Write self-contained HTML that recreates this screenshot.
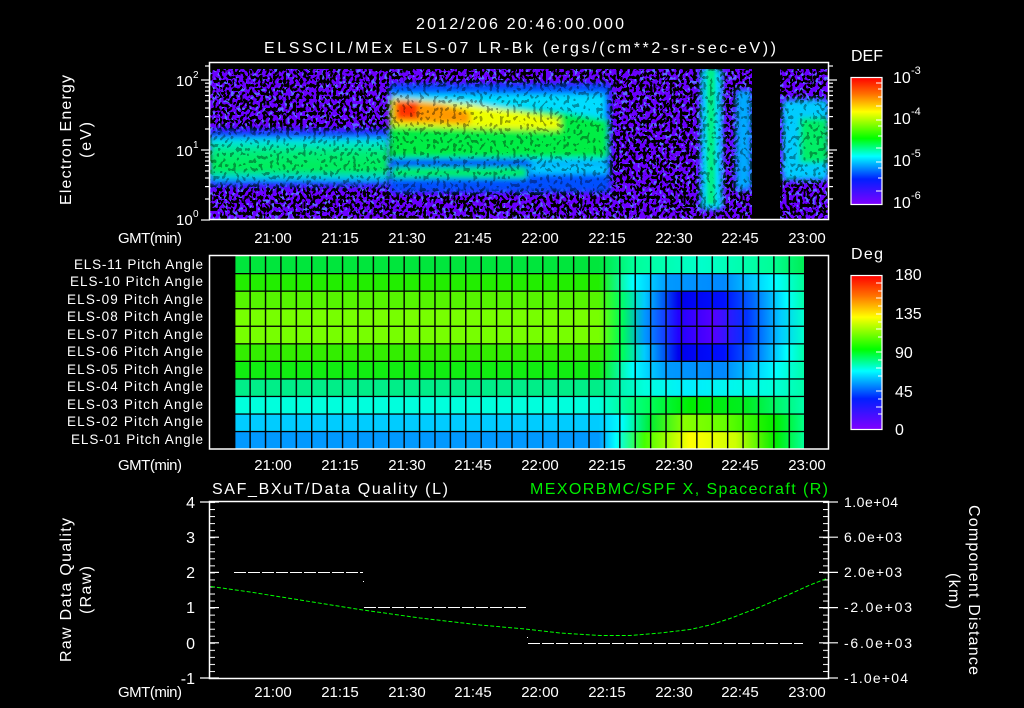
<!DOCTYPE html>
<html><head><meta charset="utf-8"><style>
html,body{margin:0;padding:0;background:#000;overflow:hidden}
svg{display:block}
text{font-family:"Liberation Sans",sans-serif;fill:#fff}
</style></head><body>
<svg width="1024" height="708" viewBox="0 0 1024 708" xmlns="http://www.w3.org/2000/svg">
<defs>
  <linearGradient id="cb" x1="0" y1="0" x2="0" y2="1">
    <stop offset="0" stop-color="#ff0000"/>
    <stop offset="0.13" stop-color="#ff7000"/>
    <stop offset="0.27" stop-color="#ffff00"/>
    <stop offset="0.48" stop-color="#00ff00"/>
    <stop offset="0.62" stop-color="#00ffff"/>
    <stop offset="0.8" stop-color="#0020ff"/>
    <stop offset="1" stop-color="#8000ff"/>
  </linearGradient>
  <filter id="blk" filterUnits="userSpaceOnUse" x="200" y="60" width="640" height="170">
    <feTurbulence type="fractalNoise" baseFrequency="0.3 0.25" numOctaves="1" seed="4"/>
    <feColorMatrix type="matrix" values="0 0 0 0 0  0 0 0 0 0  0 0 0 0 0  -4 0 0 0 2.15"/>
    <feComponentTransfer><feFuncA type="discrete" tableValues="0 1"/></feComponentTransfer>
  </filter>
  <filter id="blk2" filterUnits="userSpaceOnUse" x="200" y="60" width="640" height="170">
    <feTurbulence type="fractalNoise" baseFrequency="0.3 0.25" numOctaves="1" seed="9"/>
    <feColorMatrix type="matrix" values="0 0 0 0 0  0 0 0 0 0  0 0 0 0 0  -4 0 0 0 2.3"/>
    <feComponentTransfer><feFuncA type="discrete" tableValues="0 1"/></feComponentTransfer>
  </filter>
  <filter id="blu" filterUnits="userSpaceOnUse" x="200" y="60" width="640" height="170">
    <feTurbulence type="fractalNoise" baseFrequency="0.32 0.26" numOctaves="1" seed="17"/>
    <feColorMatrix type="matrix" values="0 0 0 0 0.1  0 0 0 0 0.15  0 0 0 0 1  -4 0 0 0 2.1"/>
    <feComponentTransfer><feFuncA type="discrete" tableValues="0 1"/></feComponentTransfer>
  </filter>
  <filter id="bl" filterUnits="userSpaceOnUse" x="190" y="50" width="660" height="190"><feGaussianBlur stdDeviation="3"/></filter>
  <filter id="bl2" filterUnits="userSpaceOnUse" x="190" y="50" width="660" height="190"><feGaussianBlur stdDeviation="1.5"/></filter>
  <clipPath id="spc"><rect x="210" y="69" width="618" height="150"/></clipPath>
  <pattern id="tminT" x="273" y="0" width="6.675" height="708" patternUnits="userSpaceOnUse"><rect x="0" y="0" width="1" height="4" fill="#fff"/></pattern>
  <pattern id="tmajT" x="273" y="0" width="66.75" height="708" patternUnits="userSpaceOnUse"><rect x="0" y="0" width="1.2" height="9" fill="#fff"/></pattern>
  <pattern id="vgrid" x="234" y="0" width="15.405" height="708" patternUnits="userSpaceOnUse"><rect x="0" y="0" width="1.4" height="708" fill="#000"/></pattern>
  <pattern id="yminB" x="0" y="502" width="1024" height="7.04" patternUnits="userSpaceOnUse"><rect x="0" y="0" width="1024" height="1" fill="#fff"/></pattern>
  <linearGradient id="r11" x1="0" x2="1"><stop offset="0.64" stop-color="#00e63c"/><stop offset="0.7" stop-color="#00ff99"/><stop offset="0.82" stop-color="#00ffcc"/><stop offset="0.94" stop-color="#00ff99"/><stop offset="1" stop-color="#00ee55"/></linearGradient>
  <linearGradient id="r10" x1="0" x2="1"><stop offset="0.64" stop-color="#22ee00"/><stop offset="0.7" stop-color="#00ffff"/><stop offset="0.76" stop-color="#0099ff"/><stop offset="0.86" stop-color="#0088ff"/><stop offset="0.95" stop-color="#00ffff"/><stop offset="1" stop-color="#00ff99"/></linearGradient>
  <linearGradient id="r09" x1="0" x2="1"><stop offset="0.64" stop-color="#55f500"/><stop offset="0.68" stop-color="#00ff66"/><stop offset="0.72" stop-color="#00ccff"/><stop offset="0.78" stop-color="#0000ee"/><stop offset="0.86" stop-color="#0010ff"/><stop offset="0.91" stop-color="#0066ff"/><stop offset="0.97" stop-color="#00ffff"/><stop offset="1" stop-color="#00ffaa"/></linearGradient>
  <linearGradient id="r08" x1="0" x2="1"><stop offset="0.64" stop-color="#77ff00"/><stop offset="0.68" stop-color="#00ff55"/><stop offset="0.72" stop-color="#0099ff"/><stop offset="0.78" stop-color="#2200ff"/><stop offset="0.84" stop-color="#5500ff"/><stop offset="0.9" stop-color="#0033ff"/><stop offset="0.96" stop-color="#00ccff"/><stop offset="1" stop-color="#00ffcc"/></linearGradient>
  <linearGradient id="r06" x1="0" x2="1"><stop offset="0.64" stop-color="#33ee00"/><stop offset="0.68" stop-color="#00ff55"/><stop offset="0.72" stop-color="#00ccff"/><stop offset="0.78" stop-color="#0000ee"/><stop offset="0.86" stop-color="#0010ff"/><stop offset="0.91" stop-color="#0066ff"/><stop offset="0.97" stop-color="#00ffff"/><stop offset="1" stop-color="#00ffaa"/></linearGradient>
  <linearGradient id="r05" x1="0" x2="1"><stop offset="0.64" stop-color="#11ee11"/><stop offset="0.7" stop-color="#00ffff"/><stop offset="0.76" stop-color="#0099ff"/><stop offset="0.86" stop-color="#0088ff"/><stop offset="0.95" stop-color="#00ffff"/><stop offset="1" stop-color="#00ffaa"/></linearGradient>
  <linearGradient id="r04" x1="0" x2="1"><stop offset="0.64" stop-color="#00ee88"/><stop offset="0.72" stop-color="#00ffdd"/><stop offset="0.8" stop-color="#00eeff"/><stop offset="0.94" stop-color="#00ffdd"/><stop offset="1" stop-color="#00ffaa"/></linearGradient>
  <linearGradient id="r03" x1="0" x2="1"><stop offset="0.64" stop-color="#00ffdd"/><stop offset="0.72" stop-color="#00ff66"/><stop offset="0.8" stop-color="#00ee00"/><stop offset="0.9" stop-color="#00ee22"/><stop offset="1" stop-color="#00ffaa"/></linearGradient>
  <linearGradient id="r02" x1="0" x2="1"><stop offset="0.64" stop-color="#00ccff"/><stop offset="0.68" stop-color="#00ffff"/><stop offset="0.73" stop-color="#00ee33"/><stop offset="0.79" stop-color="#88ff00"/><stop offset="0.86" stop-color="#66ff00"/><stop offset="0.95" stop-color="#00ee00"/><stop offset="1" stop-color="#00ff88"/></linearGradient>
  <linearGradient id="r01" x1="0" x2="1"><stop offset="0.64" stop-color="#0099ff"/><stop offset="0.67" stop-color="#00ffff"/><stop offset="0.72" stop-color="#44ff00"/><stop offset="0.8" stop-color="#ffff00"/><stop offset="0.88" stop-color="#ccff00"/><stop offset="0.95" stop-color="#00ee00"/><stop offset="1" stop-color="#00ff99"/></linearGradient>
  <linearGradient id="lband" x1="0" y1="0" x2="0" y2="1"><stop offset="0" stop-color="#00ddff"/><stop offset="0.35" stop-color="#00ee77"/><stop offset="0.75" stop-color="#00ee55"/><stop offset="1" stop-color="#00ccff"/></linearGradient>
</defs>

<text x="416" y="29" font-size="16" textLength="208">2012/206 20:46:00.000</text>
<text x="264" y="53" font-size="16" textLength="512">ELSSCIL/MEx ELS-07 LR-Bk  (ergs/(cm**2-sr-sec-eV))</text>

<!-- ===== TOP SPECTROGRAM ===== -->
<g clip-path="url(#spc)">
  <rect x="210" y="69" width="618" height="150" fill="#6a00ff"/>
  <rect x="210" y="69" width="618" height="150" filter="url(#blu)"/>
  <rect x="210" y="69" width="618" height="150" filter="url(#blk)"/>
  <rect x="608" y="69" width="220" height="150" filter="url(#blk2)"/>
  <g filter="url(#bl)">
    <rect x="210" y="130" width="178" height="56" fill="#1040ff"/>
    <rect x="210" y="138" width="178" height="42" fill="url(#lband)"/>
    <rect x="390" y="84" width="220" height="108" fill="#0050ff"/>
    <rect x="390" y="94" width="215" height="68" fill="#00ddff"/>
    <polygon points="390,100 560,112 608,120 608,158 390,158" fill="#00ee44"/>
    <polygon points="392,98 470,104 560,118 560,130 470,128 392,126" fill="#eeff00"/>
    <polygon points="394,100 440,104 470,112 470,124 394,122" fill="#ff9900"/>
    <rect x="396" y="101" width="22" height="18" fill="#ff3300"/>
    <rect x="390" y="159" width="140" height="6" fill="#0030ff"/>
    <rect x="392" y="167" width="135" height="11" fill="#00ee66"/>
    <rect x="530" y="164" width="78" height="10" fill="#00ccff"/>
    <rect x="701" y="69" width="21" height="140" fill="#00ddff"/>
    <rect x="736" y="90" width="15" height="100" fill="#00aaff"/>
    <rect x="783" y="100" width="45" height="80" fill="#00ccff"/>
    <rect x="800" y="118" width="28" height="45" fill="#00ee66"/>
  </g>
  <rect x="707" y="69" width="8" height="135" fill="#00ee88" filter="url(#bl2)"/>
  <rect x="752" y="69" width="28" height="150" fill="#000"/>
  <rect x="210" y="69" width="618" height="150" filter="url(#blk)" opacity="0.35"/>
</g>
<rect x="209.5" y="62.5" width="619" height="157" fill="none" stroke="#fff" stroke-width="1.5"/>
<rect x="210" y="63" width="618" height="4" fill="url(#tminT)"/>
<rect x="210" y="63" width="618" height="9" fill="url(#tmajT)"/>
<g transform="translate(0,282) scale(1,-1)"><rect x="210" y="63" width="618" height="4" fill="url(#tminT)"/><rect x="210" y="63" width="618" height="9" fill="url(#tmajT)"/></g>
<g stroke="#fff" stroke-width="1.2">
  <line x1="201" y1="80" x2="210" y2="80"/><line x1="201" y1="150" x2="210" y2="150"/><line x1="201" y1="220" x2="210" y2="220"/>
  <line x1="828" y1="80" x2="837" y2="80"/><line x1="828" y1="150" x2="837" y2="150"/>
  <g id="lm">
  <line x1="205" y1="199" x2="210" y2="199"/><line x1="205" y1="186.6" x2="210" y2="186.6"/><line x1="205" y1="178" x2="210" y2="178"/><line x1="205" y1="171" x2="210" y2="171"/><line x1="205" y1="165.5" x2="210" y2="165.5"/><line x1="205" y1="161" x2="210" y2="161"/><line x1="205" y1="157" x2="210" y2="157"/><line x1="205" y1="153.2" x2="210" y2="153.2"/>
  <line x1="205" y1="129" x2="210" y2="129"/><line x1="205" y1="116.6" x2="210" y2="116.6"/><line x1="205" y1="108" x2="210" y2="108"/><line x1="205" y1="101" x2="210" y2="101"/><line x1="205" y1="95.5" x2="210" y2="95.5"/><line x1="205" y1="91" x2="210" y2="91"/><line x1="205" y1="87" x2="210" y2="87"/><line x1="205" y1="83.2" x2="210" y2="83.2"/>
  <line x1="205" y1="66" x2="210" y2="66"/>
  </g>
  <use href="#lm" transform="translate(1038,0) scale(-1,1)"/>
</g>
<text x="176" y="86" font-size="15">10</text><text x="193" y="78" font-size="10">2</text>
<text x="176" y="156" font-size="15">10</text><text x="193" y="148" font-size="10">1</text>
<text x="176" y="225" font-size="15">10</text><text x="193" y="217" font-size="10">0</text>
<text transform="translate(71,140) rotate(-90)" font-size="16" text-anchor="middle" textLength="130">Electron Energy</text>
<text transform="translate(91,140) rotate(-90)" font-size="16" text-anchor="middle" textLength="36">(eV)</text>

<g font-size="15" text-anchor="middle">
  <text x="118" y="243" text-anchor="start" textLength="64">GMT(min)</text>
  <text x="273" y="243">21:00</text><text x="340" y="243">21:15</text><text x="407" y="243">21:30</text><text x="473" y="243">21:45</text><text x="540" y="243">22:00</text><text x="607" y="243">22:15</text><text x="674" y="243">22:30</text><text x="740" y="243">22:45</text><text x="807" y="243">23:00</text>
  <text x="118" y="470" text-anchor="start" textLength="64">GMT(min)</text>
  <text x="273" y="470">21:00</text><text x="340" y="470">21:15</text><text x="407" y="470">21:30</text><text x="473" y="470">21:45</text><text x="540" y="470">22:00</text><text x="607" y="470">22:15</text><text x="674" y="470">22:30</text><text x="740" y="470">22:45</text><text x="807" y="470">23:00</text>
  <text x="118" y="697" text-anchor="start" textLength="64">GMT(min)</text>
  <text x="273" y="697">21:00</text><text x="340" y="697">21:15</text><text x="407" y="697">21:30</text><text x="473" y="697">21:45</text><text x="540" y="697">22:00</text><text x="607" y="697">22:15</text><text x="674" y="697">22:30</text><text x="740" y="697">22:45</text><text x="807" y="697">23:00</text>
</g>

<text x="851" y="61" font-size="16" textLength="32">DEF</text>
<rect x="851" y="77.5" width="31" height="127" fill="url(#cb)" stroke="#fff" stroke-width="1.2"/>
<g stroke="#fff" stroke-width="1">
  <line x1="876" y1="83" x2="882" y2="83"/><line x1="878" y1="89" x2="882" y2="89"/><line x1="878" y1="97" x2="882" y2="97"/><line x1="876" y1="106" x2="882" y2="106"/><line x1="876" y1="120" x2="882" y2="120"/><line x1="878" y1="126" x2="882" y2="126"/><line x1="878" y1="136" x2="882" y2="136"/><line x1="876" y1="148" x2="882" y2="148"/><line x1="876" y1="162" x2="882" y2="162"/><line x1="878" y1="168" x2="882" y2="168"/><line x1="878" y1="178" x2="882" y2="178"/><line x1="876" y1="191" x2="882" y2="191"/>
</g>
<text x="893" y="83" font-size="16">10</text><text x="911" y="74" font-size="11">-3</text>
<text x="893" y="124" font-size="16">10</text><text x="911" y="115" font-size="11">-4</text>
<text x="893" y="166" font-size="16">10</text><text x="911" y="157" font-size="11">-5</text>
<text x="893" y="208" font-size="16">10</text><text x="911" y="199" font-size="11">-6</text>

<!-- ===== PITCH ANGLE PANEL ===== -->
<g>
  <rect x="234" y="256" width="570" height="17.6" fill="url(#r11)"/>
  <rect x="234" y="273.5" width="570" height="17.6" fill="url(#r10)"/>
  <rect x="234" y="291" width="570" height="17.6" fill="url(#r09)"/>
  <rect x="234" y="308.6" width="570" height="17.6" fill="url(#r08)"/>
  <rect x="234" y="326.1" width="570" height="17.6" fill="url(#r08)"/>
  <rect x="234" y="343.7" width="570" height="17.6" fill="url(#r06)"/>
  <rect x="234" y="361.2" width="570" height="17.6" fill="url(#r05)"/>
  <rect x="234" y="378.8" width="570" height="17.6" fill="url(#r04)"/>
  <rect x="234" y="396.3" width="570" height="17.6" fill="url(#r03)"/>
  <rect x="234" y="413.9" width="570" height="17.6" fill="url(#r02)"/>
  <rect x="234" y="431.4" width="570" height="17.6" fill="url(#r01)"/>
  <rect x="234" y="256" width="571" height="193" fill="url(#vgrid)"/>
  <g fill="#000">
    <rect x="234" y="273" width="570" height="1.3"/><rect x="234" y="290.5" width="570" height="1.3"/><rect x="234" y="308.1" width="570" height="1.3"/><rect x="234" y="325.6" width="570" height="1.3"/><rect x="234" y="343.2" width="570" height="1.3"/><rect x="234" y="360.7" width="570" height="1.3"/><rect x="234" y="378.3" width="570" height="1.3"/><rect x="234" y="395.8" width="570" height="1.3"/><rect x="234" y="413.4" width="570" height="1.3"/><rect x="234" y="430.9" width="570" height="1.3"/>
  </g>
</g>
<rect x="209.5" y="255.5" width="619" height="193.5" fill="none" stroke="#fff" stroke-width="1.5"/>
<g transform="translate(0,193)"><rect x="210" y="63" width="618" height="4" fill="url(#tminT)"/><rect x="210" y="63" width="618" height="9" fill="url(#tmajT)"/></g>
<g transform="translate(0,512) scale(1,-1)"><rect x="210" y="63" width="618" height="4" fill="url(#tminT)"/><rect x="210" y="63" width="618" height="9" fill="url(#tmajT)"/></g>
<g font-size="13.5" text-anchor="end">
  <text x="203" y="269" textLength="129">ELS-11 Pitch Angle</text>
  <text x="203" y="286" textLength="133">ELS-10 Pitch Angle</text>
  <text x="203" y="304" textLength="136">ELS-09 Pitch Angle</text>
  <text x="203" y="321" textLength="136">ELS-08 Pitch Angle</text>
  <text x="203" y="339" textLength="136">ELS-07 Pitch Angle</text>
  <text x="203" y="356" textLength="136">ELS-06 Pitch Angle</text>
  <text x="203" y="374" textLength="136">ELS-05 Pitch Angle</text>
  <text x="203" y="391" textLength="136">ELS-04 Pitch Angle</text>
  <text x="203" y="409" textLength="136">ELS-03 Pitch Angle</text>
  <text x="203" y="426" textLength="136">ELS-02 Pitch Angle</text>
  <text x="203" y="444" textLength="132">ELS-01 Pitch Angle</text>
</g>

<text x="851" y="259" font-size="16" textLength="32">Deg</text>
<rect x="851" y="275.5" width="31" height="154" fill="url(#cb)" stroke="#fff" stroke-width="1.2"/>
<g stroke="#fff" stroke-width="1">
  <line x1="876" y1="283" x2="882" y2="283"/><line x1="878" y1="291" x2="882" y2="291"/><line x1="876" y1="298" x2="882" y2="298"/><line x1="878" y1="306" x2="882" y2="306"/><line x1="876" y1="314" x2="882" y2="314"/><line x1="878" y1="322" x2="882" y2="322"/><line x1="876" y1="329" x2="882" y2="329"/><line x1="878" y1="337" x2="882" y2="337"/><line x1="876" y1="352" x2="882" y2="352"/><line x1="878" y1="360" x2="882" y2="360"/><line x1="876" y1="368" x2="882" y2="368"/><line x1="878" y1="376" x2="882" y2="376"/><line x1="876" y1="391" x2="882" y2="391"/><line x1="878" y1="399" x2="882" y2="399"/><line x1="876" y1="407" x2="882" y2="407"/><line x1="878" y1="414" x2="882" y2="414"/>
</g>
<g font-size="16">
  <text x="895" y="280">180</text><text x="895" y="319">135</text><text x="895" y="358">90</text><text x="895" y="397">45</text><text x="895" y="435">0</text>
</g>

<!-- ===== BOTTOM PANEL ===== -->
<text x="212" y="494" font-size="16" textLength="236">SAF_BXuT/Data Quality (L)</text>
<text x="828" y="494" font-size="16" text-anchor="end" textLength="298" style="fill:#00ee00">MEXORBMC/SPF X, Spacecraft (R)</text>
<rect x="209.5" y="501.5" width="619" height="177" fill="none" stroke="#fff" stroke-width="1.5"/>
<g transform="translate(0,439)"><rect x="210" y="63" width="618" height="4" fill="url(#tminT)"/><rect x="210" y="63" width="618" height="9" fill="url(#tmajT)"/></g>
<g transform="translate(0,741) scale(1,-1)"><rect x="210" y="63" width="618" height="4" fill="url(#tminT)"/><rect x="210" y="63" width="618" height="9" fill="url(#tmajT)"/></g>
<rect x="210" y="502" width="5" height="176" fill="url(#yminB)"/>
<rect x="823" y="502" width="5" height="176" fill="url(#yminB)"/>
<g stroke="#fff" stroke-width="1.2">
  <line x1="200" y1="502" x2="219" y2="502"/><line x1="210" y1="537.2" x2="219" y2="537.2"/><line x1="210" y1="572.4" x2="219" y2="572.4"/><line x1="210" y1="607.6" x2="219" y2="607.6"/><line x1="210" y1="642.8" x2="219" y2="642.8"/><line x1="200" y1="678" x2="219" y2="678"/>
  <line x1="819" y1="537.2" x2="838" y2="537.2"/><line x1="819" y1="572.4" x2="838" y2="572.4"/><line x1="819" y1="607.6" x2="838" y2="607.6"/><line x1="819" y1="642.8" x2="838" y2="642.8"/><line x1="828" y1="502" x2="838" y2="502"/><line x1="828" y1="678" x2="838" y2="678"/>
</g>
<g font-size="16" text-anchor="end">
  <text x="195" y="508">4</text><text x="195" y="543">3</text><text x="195" y="578">2</text><text x="195" y="613">1</text><text x="195" y="649">0</text><text x="195" y="684">-1</text>
</g>
<g font-size="14">
  <text x="844" y="507" textLength="54">1.0e+04</text>
  <text x="844" y="542" textLength="58">6.0e+03</text>
  <text x="844" y="577" textLength="58">2.0e+03</text>
  <text x="844" y="612" textLength="68">-2.0e+03</text>
  <text x="844" y="648" textLength="68">-6.0e+03</text>
  <text x="844" y="683" textLength="64">-1.0e+04</text>
</g>
<text transform="translate(71,590) rotate(-90)" font-size="16" text-anchor="middle" textLength="144">Raw Data Quality</text>
<text transform="translate(91,590) rotate(-90)" font-size="16" text-anchor="middle" textLength="48">(Raw)</text>
<text transform="translate(969,590) rotate(90)" font-size="16" text-anchor="middle" textLength="170">Component Distance</text>
<text transform="translate(949,591) rotate(90)" font-size="16" text-anchor="middle" textLength="36">(km)</text>
<g stroke="#fff" stroke-width="1" fill="none" stroke-dasharray="12 2">
  <line x1="234" y1="572.5" x2="363" y2="572.5"/>
  <line x1="364" y1="607.5" x2="526" y2="607.5"/>
  <line x1="528" y1="643.5" x2="803" y2="643.5"/>
</g>
<rect x="363" y="581" width="1" height="1" fill="#fff"/>
<rect x="527" y="637" width="1" height="1" fill="#fff"/>
<polyline fill="none" stroke="#00ff00" stroke-width="1" stroke-dasharray="4 2"
  points="211,586.5 250,592 300,600 363,610 420,618 480,625 525,629 560,633 600,635.5 630,635.5 660,633 690,629.5 710,625 730,618.5 760,607 790,594 810,585 828,578"/>
</svg>
</body></html>
